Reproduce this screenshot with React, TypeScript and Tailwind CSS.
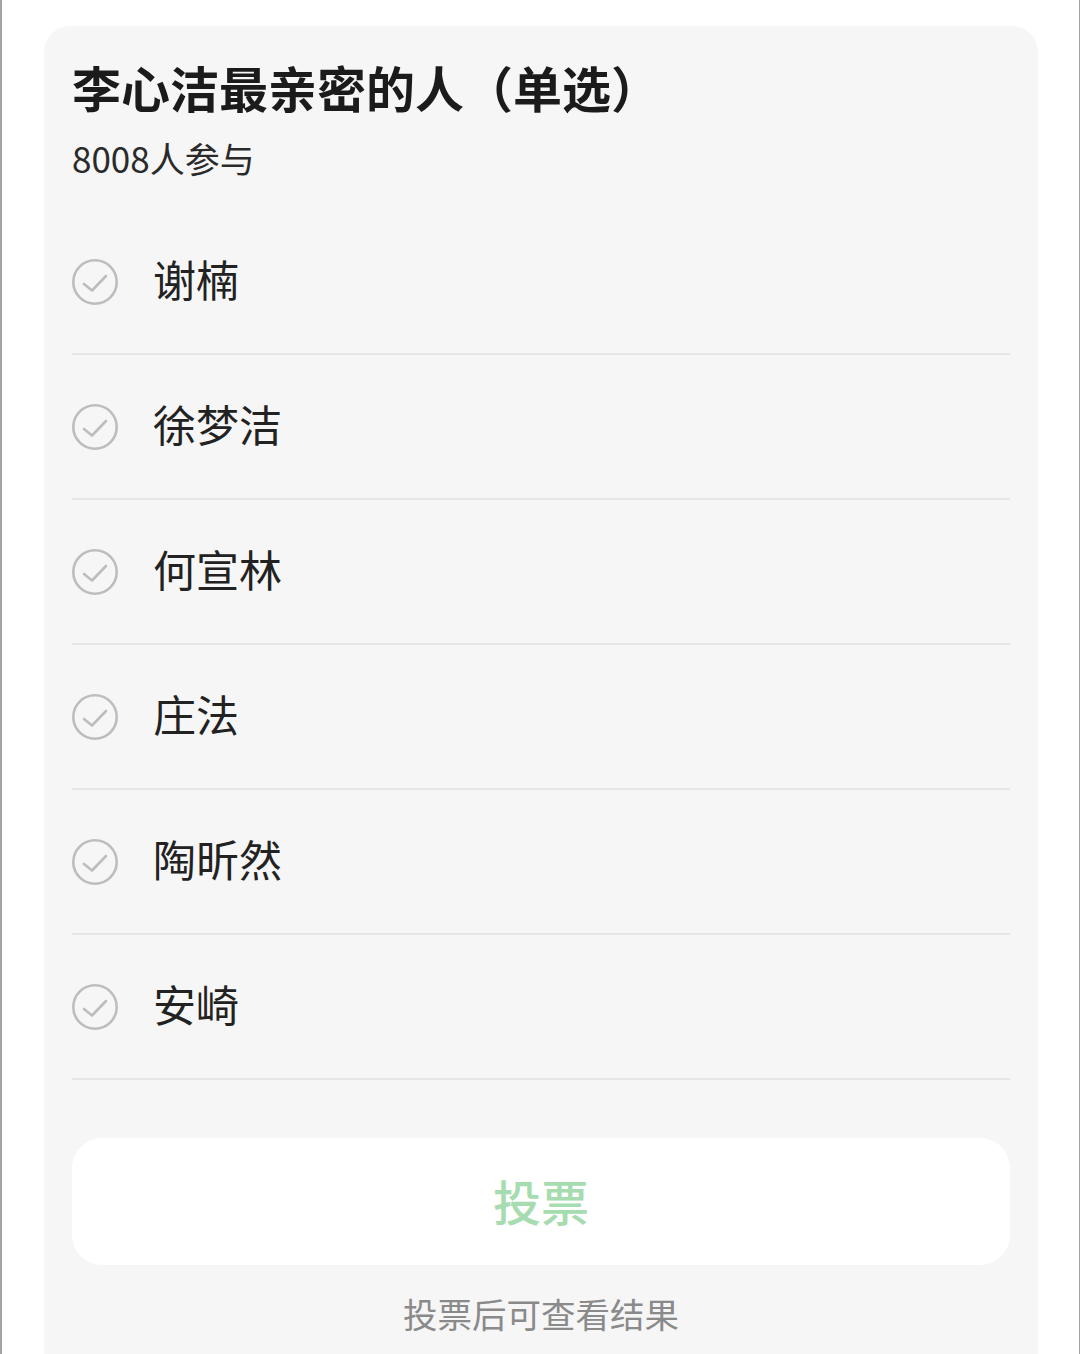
import React from "react";

const options = ["谢楠", "徐梦洁", "何宣林", "庄法", "陶昕然", "安崎"];

const CheckCircle = () => (
  <svg width="46" height="46" viewBox="0 0 46 46" fill="none" className="shrink-0">
    <circle cx="23" cy="23" r="21.7" stroke="#bdbdbd" strokeWidth="2.6" />
    <path
      d="M12 25l8 6.5L34 17"
      stroke="#bdbdbd"
      strokeWidth="2.6"
      strokeLinecap="round"
      strokeLinejoin="round"
    />
  </svg>
);

export default function App() {
  return (
    <div
      className="min-h-screen bg-white border-l-2 border-r border-[#a3a3a3] pt-[26px] pl-[42px] pr-[41px] overflow-hidden"
      style={{ fontFamily: '"Noto Sans CJK SC", "Noto Sans", sans-serif' }}
    >
      <div className="bg-[#f6f6f6] rounded-t-[26px] px-[28px] pt-[30px] pb-[60px] min-h-[1400px]">
        <h1 className="text-[49px] leading-[62px] font-bold text-[#1b1b1b]">
          李心洁最亲密的人（单选）
        </h1>
        <p className="mt-[17px] text-[35px] leading-[46px] text-[#2a2a2a]">8008人参与</p>

        <ul className="mt-[29px]">
          {options.map((name) => (
            <li
              key={name}
              className="h-[145px] flex items-center gap-[35px] border-b-2 border-[#e6e6e6]"
            >
              <CheckCircle />
              <span className="text-[43px] leading-none pb-[6px] text-[#222222]">{name}</span>
            </li>
          ))}
        </ul>

        <button className="mt-[58px] w-full h-[127px] bg-white rounded-[30px] flex items-center justify-center">
          <span className="text-[48px] leading-none pb-[4px] font-medium text-[#a6dcb0]">投票</span>
        </button>

        <p className="mt-[26px] text-center text-[34.5px] leading-[44px] text-[#8a8a8a]">
          投票后可查看结果
        </p>
      </div>
    </div>
  );
}
